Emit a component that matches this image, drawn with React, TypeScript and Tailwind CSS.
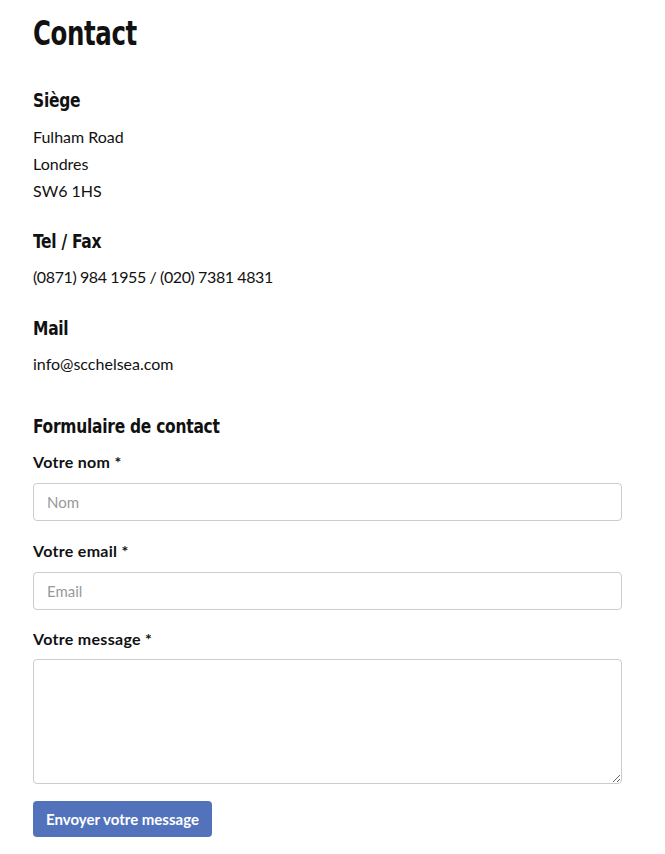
const heading = { fontFamily: '"DejaVu Sans Condensed", "DejaVu Sans", sans-serif' };

function H2({ children, className }: { children: React.ReactNode; className: string }) {
  return (
    <h2 className={`text-[20px] font-bold leading-[26px] tracking-[-0.3px] font-stretch-condensed ${className}`} style={heading}>
      <span className="inline-block origin-left scale-x-[0.86]">{children}</span>
    </h2>
  );
}

function Field({ label, placeholder, className }: { label: string; placeholder: string; className: string }) {
  return (
    <div className={className}>
      <label className="mb-[10px] block text-[16px] font-bold leading-[22px] tracking-[0.3px]">{label}</label>
      <input
        placeholder={placeholder}
        className="block h-[38px] w-full rounded-[4px] border border-[#cccccc] px-[13px] text-[15px] outline-none placeholder:text-[#999999]"
      />
    </div>
  );
}

export default function App() {
  return (
    <div
      className="min-h-screen bg-white px-[33px] text-[#111111]"
      style={{ fontFamily: 'Lato, "Open Sans", sans-serif' }}
    >
      <div className="w-[589px] pt-[14px]">
        <h1 className="text-[34px] font-bold leading-[38px] tracking-[-0.5px] font-stretch-condensed" style={heading}>
          <span className="inline-block origin-left scale-x-[0.8]">Contact</span>
        </h1>

        <H2 className="mt-[35px]">Siège</H2>
        <p className="mt-[10px] text-[16px] leading-[27px]">
          Fulham Road
          <br />
          Londres
          <br />
          SW6 1HS
        </p>

        <H2 className="mt-[24px]">Tel / Fax</H2>
        <p className="mt-[9px] text-[16px] leading-[27px] tracking-[-0.4px]">(0871) 984 1955 / (020) 7381 4831</p>

        <H2 className="mt-[25px]">Mail</H2>
        <p className="mt-[9px] text-[16px] leading-[27px]">info@scchelsea.com</p>

        <H2 className="mt-[36px]">Formulaire de contact</H2>

        <form className="mt-[12px]" onSubmit={(e) => e.preventDefault()}>
          <Field className="mb-[19px]" label="Votre nom *" placeholder="Nom" />
          <Field className="mb-[18px]" label="Votre email *" placeholder="Email" />
          <div className="mb-[17px]">
            <label className="mb-[9px] block text-[16px] font-bold leading-[22px] tracking-[0.3px]">Votre message *</label>
            <textarea className="block h-[125px] w-full rounded-[4px] border border-[#cccccc] px-[13px] py-[8px] text-[15px] outline-none" />
          </div>
          <button
            type="submit"
            className="h-[36px] rounded-[4px] bg-[#5273bc] px-[13px] text-[15px] font-bold text-white"
          >
            Envoyer votre message
          </button>
        </form>
      </div>
    </div>
  );
}
